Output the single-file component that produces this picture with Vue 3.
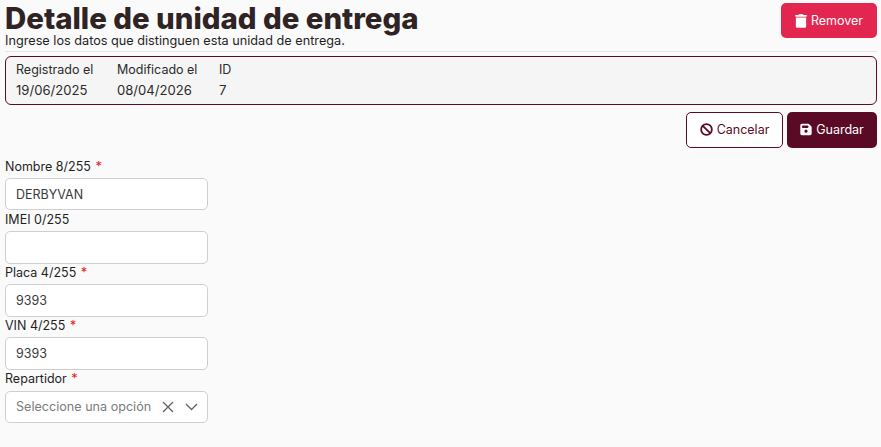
<script setup>
const meta = [
  { label: 'Registrado el', value: '19/06/2025' },
  { label: 'Modificado el', value: '08/04/2026' },
  { label: 'ID', value: '7' },
]
const fields = [
  { label: 'Nombre 8/255', value: 'DERBYVAN', required: true },
  { label: 'IMEI 0/255', value: '', required: false },
  { label: 'Placa 4/255', value: '9393', required: true },
  { label: 'VIN 4/255', value: '9393', required: true },
]
</script>

<template>
  <div class="page">
    <header class="head">
      <div class="titles">
        <h1>Detalle de unidad de entrega</h1>
        <p>Ingrese los datos que distinguen esta unidad de entrega.</p>
      </div>
      <button class="btn danger">
        <svg width="12" height="14" viewBox="0 0 448 512"><path fill="currentColor" d="M135 18C140 7 151 0 163 0h122c12 0 23 7 28 18l7 14h96c18 0 32 14 32 32s-14 32-32 32H32C14 96 0 82 0 64s14-32 32-32h96zM32 128h384v320c0 35-29 64-64 64H96c-35 0-64-29-64-64z"/></svg>
        Remover
      </button>
    </header>
    <hr class="rule" />
    <section class="meta">
      <div v-for="m in meta" :key="m.label" class="meta-item">
        <span>{{ m.label }}</span>
        <span class="val">{{ m.value }}</span>
      </div>
    </section>
    <div class="actions">
      <button class="btn outline">
        <svg width="13" height="13" viewBox="0 0 16 16"><circle cx="8" cy="8" r="6.6" fill="none" stroke="currentColor" stroke-width="2.2"/><path d="M3.4 3.4l9.2 9.2" stroke="currentColor" stroke-width="2.2"/></svg>
        Cancelar
      </button>
      <button class="btn primary">
        <svg width="12" height="13" viewBox="0 0 448 512"><path fill="currentColor" d="M64 32C29 32 0 61 0 96v320c0 35 29 64 64 64h320c35 0 64-29 64-64V173c0-17-7-33-19-45l-77-77c-12-12-28-19-45-19zm0 96c0-18 14-32 32-32h192c18 0 32 14 32 32v32c0 18-14 32-32 32H96c-18 0-32-14-32-32zm160 128a64 64 0 1 1 0 128 64 64 0 1 1 0-128z"/></svg>
        Guardar
      </button>
    </div>
    <form class="form">
      <div v-for="f in fields" :key="f.label" class="field">
        <label>{{ f.label }} <b v-if="f.required">*</b></label>
        <div class="input">{{ f.value }}</div>
      </div>
      <div class="field">
        <label>Repartidor <b>*</b></label>
        <div class="input select">
          <span class="placeholder">Seleccione una opción</span>
          <svg class="x" width="12" height="12" viewBox="0 0 12 12"><path d="M1 1l10 10M11 1L1 11" stroke="#5f6368" stroke-width="1.3" fill="none"/></svg>
          <svg class="chev" width="13" height="8" viewBox="0 0 13 8"><path d="M1 1l5.5 5.5L12 1" stroke="#5f6368" stroke-width="1.3" fill="none"/></svg>
        </div>
      </div>
    </form>
  </div>
</template>

<style>
html, body { margin: 0; background: #fafafa; }
</style>

<style scoped>
.page {
  box-sizing: border-box;
  width: 881px;
  height: 447px;
  padding: 3px 4px 0 5px;
  background: #fafafa;
  color: #1f1f1f;
  font-family: Inter, "Noto Sans", sans-serif;
  font-size: 13px;
  overflow: hidden;
}
.head { display: flex; justify-content: space-between; align-items: flex-start; }
h1 {
  margin: 0;
  font-size: 29.4px;
  line-height: 31px;
  font-weight: 800;
  color: #2f2323;
}
.titles p { margin: 0; font-size: 12.7px; line-height: 14px; }
.btn {
  display: inline-flex;
  align-items: center;
  justify-content: center;
  gap: 4px;
  box-sizing: border-box;
  border-radius: 5px;
  font: inherit;
  font-size: 12.5px;
  padding: 0;
  border: 1px solid transparent;
}
.danger { width: 96px; height: 35px; background: #e3264f; color: #fff; }
.rule { border: 0; border-top: 1px solid #e6e6e6; margin: 3px 0 4px; }
.meta {
  box-sizing: border-box;
  height: 49px;
  display: grid;
  grid-template-columns: 101px 102px auto;
  justify-content: start;
  padding: 6px 10px;
  background: #f5f5f5;
  border: 1px solid #5c0a25;
  border-radius: 6px;
}
.meta-item { display: flex; flex-direction: column; gap: 6px; line-height: 14px; font-size: 12.5px; color: #2b2b2b; }
.val { font-size: 13.1px; }
.actions { display: flex; justify-content: flex-end; gap: 4px; margin-top: 7px; }
.outline { width: 97px; height: 36px; background: #fff; border-color: #5c0a25; color: #5c0a25; padding-bottom: 2px; }
.primary { width: 90px; height: 36px; background: #5a0a24; color: #fff; padding-bottom: 2px; }
.form { margin-top: 9.9px; }
.field { width: 203px; height: 53.15px; }
label { display: block; height: 20.1px; line-height: 18px; font-size: 12.5px; color: #1f1f1f; }
label b { color: #f01d2c; font-weight: 500; margin-left: 1px; }
.input {
  box-sizing: border-box;
  height: 32.5px;
  display: flex;
  align-items: center;
  padding: 0 10px;
  background: #fff;
  border: 1px solid #cfcfcf;
  border-radius: 5px;
  font-size: 12.5px;
  color: #3a3a3a;
}
.placeholder { color: #7c7c7c; flex: 1; white-space: nowrap; font-size: 12.6px; }
.x { margin-right: 11px; flex: none; }
.chev { flex: none; margin-right: -1px; }
</style>
